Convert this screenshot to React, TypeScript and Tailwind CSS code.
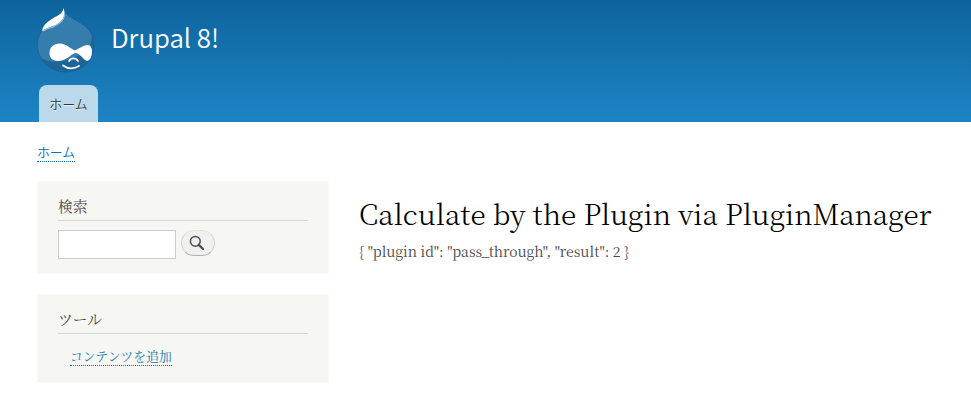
import React from 'react';

const sans = "font-['Noto_Sans_CJK_JP','Noto_Sans',sans-serif]";
const serif = "font-['Noto_Serif_CJK_JP','Liberation_Serif','Noto_Sans_CJK_JP',serif]";

function Logo() {
  return (
    <svg className="block h-[66px] w-[58px]" viewBox="0 0 58 66" fill="none">
      <defs>
        <clipPath id="drop">
          <path d="M27 0C27 6 33 9 40 13C50 18 57 25 57 37C57 53 45 64 29 64C13 64 0.5 52 0.5 37C0.5 25 8 18 16 12C22 8 26 6 27 0Z" />
        </clipPath>
      </defs>
      <g clipPath="url(#drop)">
        <path d="M0 0H58V66H0Z" fill="#347dac" />
        <path d="M52 20C60 34 50 46 36 50C23 55 10 55 3 49L4 66H58V16Z" fill="#1d6596" />
      </g>
      <path d="M27 0C27 6 33 9 40 13C50 18 57 25 57 37C57 53 45 64 29 64C13 64 0.5 52 0.5 37C0.5 25 8 18 16 12C22 8 26 6 27 0Z" stroke="#1b6291" strokeWidth="0.7" />
      <path d="M26.5 0C28 5 28 8 25 12C19 19 12 18 5 23C6 16 13 12 18 9C23 7 26 4 26.5 0Z" fill="#fff" />
      <path d="M27.5 7C27 13 22 16 16 19C12 20 9 21 6 23" stroke="#9ec2d8" strokeWidth="1.2" />
      <path d="M23 35.5C29 35.5 34 41 38 42.5C43 40 47 37 51 37C56 37 56 47 53 51C51 54 48 53 46 50C43 47 41 45 38 45C33 47 29 53 21 53C15 53 12 49 12.5 44C13 39 17 35.5 23 35.5Z" fill="#fff" />
      <path d="M32 53C34 49.5 39 49.5 41 53" stroke="#fff" strokeWidth="1.7" strokeLinecap="round" />
      <path d="M26 57.5C31 61 37 61 42 58" stroke="#fff" strokeWidth="1.8" strokeLinecap="round" />
    </svg>
  );
}

function Block({ title, className, children }: { title: string; className: string; children: React.ReactNode }) {
  return (
    <section className={`border border-[#f9f9f9] bg-[#f6f6f2] px-5 pt-[13px] ${className}`}>
      <h2 className="h-[26px] border-b border-[#d6d6d6] text-[14.8px] leading-[22px] text-[#4a4a4a]">{title}</h2>
      {children}
    </section>
  );
}

export default function App() {
  return (
    <div className={`h-[408px] overflow-hidden bg-white ${serif}`}>
      <header className={`flex h-[122px] flex-col justify-between bg-linear-to-b from-[#0d649d] to-[#1e84c5] pl-[37px] ${sans}`}>
        <div className="flex pt-2">
          <Logo />
          <div className="ml-4 pt-[10px] text-[25.8px] leading-[38px] font-[350] text-white">Drupal 8!</div>
        </div>
        <nav className="ml-[2px] h-[37px] w-[59px] rounded-t-lg bg-[#bcd9eb] text-center text-[12.9px] leading-[38px] font-[350] text-[#333] [text-shadow:0_1px_0_#eee]">ホーム</nav>
      </header>
      <div className={`flex h-[59px] items-start pt-[22px] pl-[37px] ${sans}`}>
        <a className="h-[18px] border-b border-dotted border-[#0071b3] text-[12.8px] leading-[16px] font-[350] text-[#0071b3]">ホーム</a>
      </div>
      <div className="flex pl-[37px]">
        <aside className="flex w-[292px] shrink-0 flex-col gap-5">
          <Block title="検索" className="h-[93px]">
            <form className="flex items-start gap-[5px] pt-[9px]">
              <input aria-label="検索" className="h-[29px] w-[118px] border border-[#ccc] bg-white px-1 outline-none" />
              <button type="button" aria-label="検索" className="flex h-[26px] w-[34px] items-center justify-center rounded-full border border-[#d2d2d2] border-t-[#e4e4e4] border-b-[#b4b4b4] bg-[#f0f0f0]">
                <svg className="mr-[2px] mb-px h-4 w-4" viewBox="0 0 16 16" fill="none" stroke="#505050">
                  <circle cx="6.3" cy="6.3" r="4.9" strokeWidth="1.5" />
                  <path d="M9.8 9.8L14 14" strokeWidth="2.4" strokeLinecap="round" />
                </svg>
              </button>
            </form>
          </Block>
          <Block title="ツール" className="h-[89px]">
            <div className="flex pt-[14px] pl-3">
              <a className="h-[18px] border-b border-dotted border-[#0071b3] text-[12.8px] leading-[16px] whitespace-nowrap text-[#187ab7]">コンテンツを追加</a>
            </div>
          </Block>
        </aside>
        <main className="ml-[30px] pt-[11px]">
          <h1 className="text-[28px] leading-[42px] font-light tracking-[-0.02px] whitespace-nowrap text-black">Calculate by the Plugin via PluginManager</h1>
          <p className="mt-[7px] text-[14px] leading-[21px] whitespace-nowrap text-[#4a4a4a]">{'{ "plugin id": "pass_through", "result": 2 }'}</p>
        </main>
      </div>
    </div>
  );
}
